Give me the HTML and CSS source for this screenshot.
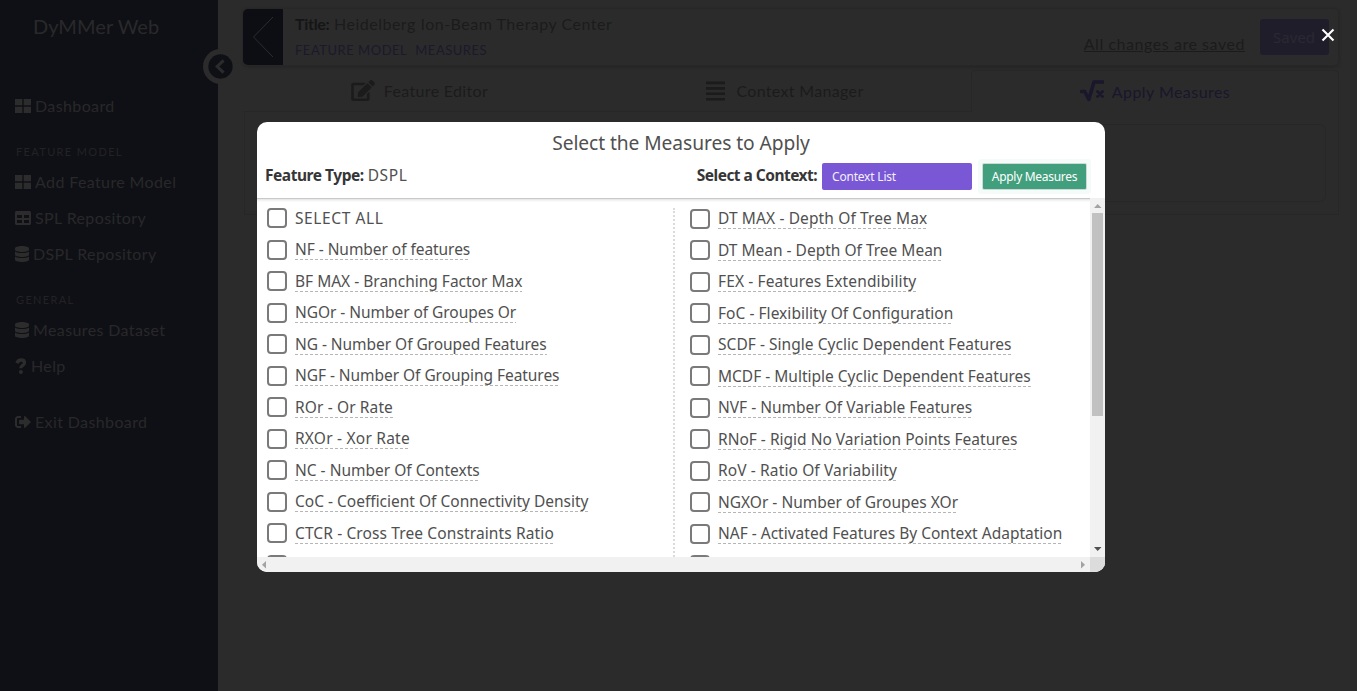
FILE: index.html
```html
<!DOCTYPE html>
<html lang="en">
<head>
<meta charset="utf-8">
<title>DyMMer Web</title>
<link rel="stylesheet" href="styles.css">
</head>
<body>
<svg class="defs" aria-hidden="true">
  <symbol id="i-grid" viewBox="0 0 16 16"><path d="M0 1h7.3v6.3H0zM8.700 1H16v6.300H8.700zM0 8.700h7.300V15H0zM8.700 8.700H16V15H8.700z"/></symbol>
  <symbol id="i-table" viewBox="0 0 512 512"><path fill-rule="evenodd" d="M464 32H48C21.500 32 0 53.500 0 80v352c0 26.500 21.500 48 48 48h416c26.500 0 48-21.500 48-48V80c0-26.500-21.500-48-48-48zM224 416H64v-96h160v96zm0-160H64v-96h160v96zm224 160H288v-96h160v96zm0-160H288v-96h160v96z"/></symbol>
  <symbol id="i-db" viewBox="0 0 448 512"><path d="M448 73.143v45.714C448 159.143 347.667 192 224 192S0 159.143 0 118.857V73.143C0 32.857 100.333 0 224 0s224 32.857 224 73.143zM448 176v102.857C448 319.143 347.667 352 224 352S0 319.143 0 278.857V176c48.125 33.143 136.208 48.572 224 48.572S399.874 209.143 448 176zm0 160v102.857C448 479.143 347.667 512 224 512S0 479.143 0 438.857V336c48.125 33.143 136.208 48.572 224 48.572S399.874 369.143 448 336z"/></symbol>
  <symbol id="i-exit" viewBox="0 0 512 512"><path d="M497 273L329 441c-15 15-41 4.500-41-17v-96H152c-13.300 0-24-10.700-24-24v-96c0-13.300 10.700-24 24-24h136V88c0-21.400 25.900-32 41-17l168 168c9.300 9.400 9.300 24.600 0 34zM192 436v-40c0-6.600-5.400-12-12-12H96c-17.700 0-32-14.300-32-32V160c0-17.700 14.300-32 32-32h84c6.600 0 12-5.400 12-12V76c0-6.600-5.400-12-12-12H96c-53 0-96 43-96 96v192c0 53 43 96 96 96h84c6.600 0 12-5.400 12-12z"/></symbol>
  <symbol id="i-help" viewBox="0 0 12 16"><path d="M2 5.200C2.800 2.900 4.200 2 6 2c2 0 3.500 1.100 3.500 2.800 0 2.600-3.700 2.500-3.700 5.400" fill="none" stroke="currentColor" stroke-width="3.300"/><circle cx="5.900" cy="14" r="2"/></symbol>
  <symbol id="i-edit" viewBox="0 0 576 512"><path d="M402.600 83.200l90.200 90.200c3.800 3.800 3.800 10 0 13.800L274.400 405.600l-92.800 10.300c-12.400 1.400-22.900-9.100-21.500-21.500l10.300-92.800L388.800 83.200c3.800-3.800 10-3.800 13.800 0zm162-22.900l-48.800-48.800c-15.200-15.200-39.900-15.200-55.200 0l-35.400 35.400c-3.800 3.800-3.800 10 0 13.800l90.200 90.200c3.800 3.800 10 3.800 13.800 0l35.400-35.400c15.200-15.300 15.200-40 0-55.200zM384 346.200V448H64V128h229.800c3.200 0 6.200-1.300 8.500-3.500l40-40c7.600-7.600 2.200-20.500-8.500-20.500H48C21.500 64 0 85.500 0 112v352c0 26.500 21.500 48 48 48h352c26.500 0 48-21.500 48-48V306.200c0-10.700-12.900-16-20.500-8.500l-40 40c-2.200 2.300-3.500 5.300-3.500 8.500z"/></symbol>
  <symbol id="i-lines" viewBox="0 0 19 20"><path d="M0 .5h19v2.700H0zM0 6h19v2.700H0zM0 11.400h19v2.700H0zM0 16.900h19v2.700H0z"/></symbol>
  <symbol id="i-root" viewBox="0 0 24 22"><path d="M1.500 11.500h3.300l4 8L14 2h9" fill="none" stroke="currentColor" stroke-width="3.500" stroke-linecap="round" stroke-linejoin="round"/><path d="M17.500 11.500l5 5m0-5l-5 5" fill="none" stroke="currentColor" stroke-width="2.700" stroke-linecap="round"/></symbol>
</svg>

<aside class="sidebar">
  <div class="brand"><span>DyMMer Web</span></div>
  <a class="nav"><svg class="w16"><use href="#i-grid"/></svg><span>Dashboard</span></a>
  <h6>FEATURE MODEL</h6>
  <a class="nav"><svg class="w16"><use href="#i-grid"/></svg><span>Add Feature Model</span></a>
  <a class="nav"><svg class="w16"><use href="#i-table"/></svg><span>SPL Repository</span></a>
  <a class="nav"><svg class="w14"><use href="#i-db"/></svg><span>DSPL Repository</span></a>
  <h6>GENERAL</h6>
  <a class="nav"><svg class="w14"><use href="#i-db"/></svg><span>Measures Dataset</span></a>
  <a class="nav"><svg class="w12"><use href="#i-help"/></svg><span>Help</span></a>
  <a class="nav exit"><svg class="w16"><use href="#i-exit"/></svg><span>Exit Dashboard</span></a>
  <svg class="collapse" viewBox="0 0 34 34"><circle cx="17" cy="17" r="17" class="ring"/><circle cx="17" cy="17" r="11.800" class="disc"/><path d="M20 11L13.800 17l6.200 6"/></svg>
</aside>

<main class="page">
  <header class="titlebar">
    <svg class="back" viewBox="0 0 40 56"><path d="M30 8L10.500 28 30 48"/></svg>
    <div class="info">
      <p class="title"><b>Title:</b> <span>Heidelberg Ion-Beam Therapy Center</span></p>
      <p class="links"><span>FEATURE MODEL</span><span>MEASURES</span></p>
    </div>
    <span class="status">All changes are saved</span>
    <span class="saved">Saved</span>
  </header>
  <nav class="tabs">
    <a class="tab"><svg class="edit"><use href="#i-edit"/></svg><span>Feature Editor</span></a>
    <a class="tab"><svg class="lines"><use href="#i-lines"/></svg><span>Context Manager</span></a>
    <a class="tab active"><svg class="root"><use href="#i-root"/></svg><span>Apply Measures</span></a>
  </nav>
  <section class="panel"><div class="card"></div></section>
</main>

<svg class="close" viewBox="0 0 14 14"><path d="M1.500 1.500l11 11m0-11l-11 11"/></svg>

<div class="modal">
  <div class="modal-head">
    <h2>Select the Measures to Apply</h2>
    <div class="controls">
      <p class="type"><b>Feature Type:</b> <span>DSPL</span></p>
      <b class="ctx">Select a Context:</b>
      <span class="select">Context List</span>
      <span class="apply">Apply Measures</span>
    </div>
  </div>
  <div class="modal-body">
    <div class="list">
      <div class="col">
        <label><i></i><span class="plain">SELECT ALL</span></label>
        <label><i></i><span class="snug">NF - Number of features</span></label>
        <label><i></i><span>BF MAX - Branching Factor Max</span></label>
        <label><i></i><span class="snug">NGOr - Number of Groupes Or</span></label>
        <label><i></i><span class="snug">NG - Number Of Grouped Features</span></label>
        <label><i></i><span class="snug">NGF - Number Of Grouping Features</span></label>
        <label><i></i><span class="loose">ROr - Or Rate</span></label>
        <label><i></i><span class="looser">RXOr - Xor Rate</span></label>
        <label><i></i><span>NC - Number Of Contexts</span></label>
        <label><i></i><span>CoC - Coefficient Of Connectivity Density</span></label>
        <label><i></i><span class="loose">CTCR - Cross Tree Constraints Ratio</span></label>
        <label><i></i></label>
      </div>
      <div class="col right">
        <label><i></i><span class="loose">DT MAX - Depth Of Tree Max</span></label>
        <label><i></i><span>DT Mean - Depth Of Tree Mean</span></label>
        <label><i></i><span class="loose">FEX - Features Extendibility</span></label>
        <label><i></i><span class="wide">FoC - Flexibility Of Configuration</span></label>
        <label><i></i><span class="wide">SCDF - Single Cyclic Dependent Features</span></label>
        <label><i></i><span>MCDF - Multiple Cyclic Dependent Features</span></label>
        <label><i></i><span>NVF - Number Of Variable Features</span></label>
        <label><i></i><span>RNoF - Rigid No Variation Points Features</span></label>
        <label><i></i><span class="loose">RoV - Ratio Of Variability</span></label>
        <label><i></i><span>NGXOr - Number of Groupes XOr</span></label>
        <label><i></i><span>NAF - Activated Features By Context Adaptation</span></label>
        <label><i></i></label>
      </div>
    </div>
    <div class="vbar">
      <svg viewBox="0 0 15 15"><path d="M4 10h7.500L7.700 6z"/></svg>
      <div class="thumb"></div>
      <svg class="down" viewBox="0 0 15 15"><path d="M4 5h7.500L7.700 9z"/></svg>
    </div>
  </div>
  <div class="hbar">
    <svg viewBox="0 0 15 15"><path d="M9 4v7.500L5 7.700z"/></svg>
    <svg class="next" viewBox="0 0 15 15"><path d="M6 4v7.500l4-3.800z"/></svg>
    <div class="corner"></div>
  </div>
</div>
</body>
</html>
```
FILE: styles.css
```css
* { box-sizing: border-box; }
body {
  margin: 0;
  height: 691px;
  display: flex;
  overflow: hidden;
  background: #2b2b2b;
  font-family: Lato, sans-serif;
  font-weight: 400;
  color: #1b1b1b;
}
h2, h6, p { margin: 0; }
svg { display: block; flex: none; fill: currentColor; }
.defs { position: absolute; width: 0; height: 0; }

.sidebar {
  position: relative;
  width: 218px;
  height: 691px;
  padding-left: 15px;
  background: #0f1015;
  color: #2c2c2c;
}
.brand { height: 88px; padding: 12px 0 0 18px; font-size: 20px; line-height: 28px; letter-spacing: .05px; color: #29292a; }
.nav { display: flex; align-items: center; gap: 4px; height: 36px; font-size: 16px; white-space: nowrap; }
.nav span { letter-spacing: .38px; margin-top: -2px; color: #28282a; }
.nav svg { height: 16px; }
.w16 { width: 16px; }
.w14 { width: 14px; }
.w12 { width: 12px; }
h6 { height: 40px; padding: 20px 0 0 1px; font: 400 11px/16px Lato, sans-serif; letter-spacing: 1.350px; color: #222225; }
.exit { margin-top: 20px; }
.collapse { position: absolute; left: 203px; top: 49px; width: 35px; height: 35px; }
.ring { fill: #2b2b2b; }
.disc { fill: #0f1015; }
.collapse path { fill: none; stroke: #2b2b2b; stroke-width: 3; }

.page { width: 1139px; padding: 8px 18px 0 25px; }
.titlebar {
  display: flex;
  height: 58px;
  border: 1px solid #272727;
  border-radius: 5px;
  box-shadow: 0 1px 3px #232323;
}
.back { width: 40px; height: 56px; border-radius: 5px 0 0 5px; background: #0d0e14; margin-left: -1px; }
.back path { fill: none; stroke: #2d2d2d; stroke-width: 1; }
.info { flex: 1; padding: 3px 0 0 12px; white-space: nowrap; }
.title { font-size: 16px; line-height: 24px; letter-spacing: .5px; }
.title b { font-weight: 700; letter-spacing: -.3px; color: #151515; }
.links { display: flex; gap: 8px; margin-top: 5px; font-size: 13px; line-height: 18px; letter-spacing: .52px; color: #1c192b; }
.status { margin: 23px 15px 0 0; font-size: 16px; line-height: 24px; letter-spacing: .55px; text-decoration: underline; white-space: nowrap; }
.saved { width: 69px; height: 36px; margin: 10px 9px 0 0; padding-left: 13px; border-radius: 3px; background: #201d2b; color: #2b2832; font: 400 15px/37px "Noto Sans", sans-serif; }

.tabs { display: flex; height: 42px; margin-top: 4px; }
.tab {
  display: flex;
  align-items: center;
  justify-content: center;
  width: 364px;
  padding-right: 11px;
  font-size: 16px;
  letter-spacing: .33px;
  border-bottom: 1px solid #272727;
}
.tab:nth-child(2) { padding-right: 8px; }
.tab.active { width: 368px; padding: 0 0 1px; border: 1px solid #272727; border-bottom: 0; border-radius: 4px 4px 0 0; color: #1a162b; letter-spacing: .45px; }
.edit { width: 24px; height: 21px; margin-right: 9px; }
.lines { width: 19px; height: 20px; margin-right: 11px; }
.root { width: 24px; height: 22px; margin-right: 8px; }
.panel { height: 103px; margin-left: 1px; padding: 12px; border: 1px solid #272727; border-top: 0; width: 1095px; }
.card { height: 78px; border: 1px solid #272727; border-radius: 6px; }

.close { position: absolute; left: 1321px; top: 28px; width: 14px; height: 14px; }
.close path { fill: none; stroke: #fff; stroke-width: 2.100; }

.modal {
  position: absolute;
  left: 257px;
  top: 122px;
  width: 848px;
  height: 450px;
  border-radius: 10px;
  overflow: hidden;
  background: #fff;
  color: #505050;
  font-family: "Noto Sans", sans-serif;
  font-weight: 400;
}
.modal-head { height: 76px; }
h2 { height: 41px; text-align: center; font-size: 19.200px; line-height: 42px; font-weight: 400; letter-spacing: -.07px; }
.controls { display: flex; height: 27px; padding: 0 19px 0 8px; font-size: 15.500px; line-height: 25px; white-space: nowrap; }
.controls b { color: #363636; font-weight: 700; letter-spacing: -.46px; }
.controls .ctx { letter-spacing: -.53px; }
.type { flex: 1; }
.type span { letter-spacing: .6px; }
.select { width: 150px; height: 27px; margin: 0 11px 0 5px; padding-left: 10px; border-radius: 2px; background: #7957d5; color: #f3effc; font-size: 12px; line-height: 28px; letter-spacing: -.2px; }
.apply { width: 103px; height: 25px; margin-top: 1px; background: #429f7e; border-radius: 1px; color: #fff; font-size: 12px; line-height: 26px; letter-spacing: -.3px; text-align: center; box-shadow: 0 0 0 1px #cddad5, 0 0 0 5px #f5fbf9; }
.modal-body { display: flex; height: 359px; }
.list { display: flex; width: 833px; height: 359px; overflow: hidden; border-top: 1px solid #c9c9c9; box-shadow: inset 0 3px 3px -2px #ddd; }
.col { width: 418px; height: 360px; margin-top: 9px; padding-left: 10px; border-right: 2px dotted #dbdbdb; flex: none; }
.col.right { border: 0; padding-left: 15px; padding-top: .5px; }
label { display: flex; align-items: flex-start; gap: 8px; height: 31.500px; font-size: 15.500px; white-space: nowrap; }
label i { width: 20px; height: 20px; border: 2px solid #7a7a7a; border-radius: 4px; }
label span {
  height: 21px;
  margin-top: -.4px;
  line-height: 20px;
  background: repeating-linear-gradient(90deg, #b5b5b5 0 3px, transparent 3px 5px) bottom / 100% 1px no-repeat;
}
label .plain { background: none; letter-spacing: .6px; }
.snug { letter-spacing: -.05px; }
.wide { letter-spacing: .04px; }
.loose { letter-spacing: .12px; }
.looser { letter-spacing: .22px; }
.vbar { display: flex; flex-direction: column; width: 15px; background: #f1f1f1; color: #a3a3a3; }
.vbar svg, .hbar svg { width: 15px; height: 15px; }
.thumb { width: 11px; height: 203px; margin-left: 2px; background: #c1c1c1; }
.vbar .down { margin-top: auto; color: #505050; }
.hbar { display: flex; height: 15px; background: #f1f1f1; color: #a3a3a3; }
.hbar .next { margin-left: auto; }
.corner { width: 15px; height: 15px; background: #dcdcdc; }
```
